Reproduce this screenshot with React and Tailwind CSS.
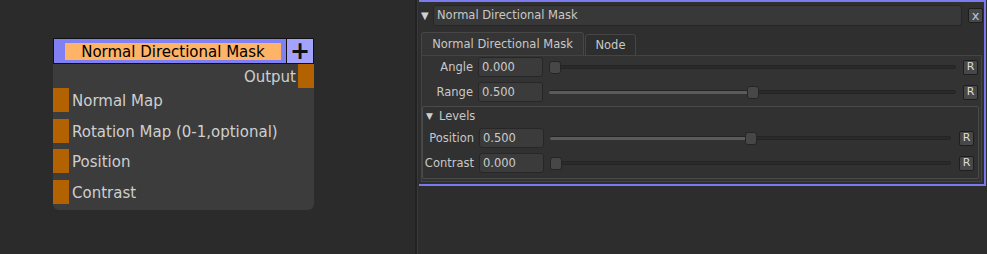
const PORT = "bg-[#b26200]";

function NodeRow({ label }) {
  return (
    <div className="flex h-[24px] items-center">
      <div className={`h-full w-[16px] ${PORT}`} />
      <span className="ml-[3px] pt-[3px] text-[15px] text-[#cfcfcf]">{label}</span>
    </div>
  );
}

function Slider({ value }) {
  return (
    <div className="relative flex h-[13px] flex-1 items-center">
      <div className="h-[4px] w-full rounded-full border border-[#242424] bg-[#2a2a2a]" />
      <div
        className="absolute left-0 top-[5px] h-[3px] rounded-l-full bg-[#5a5a5a]"
        style={{ width: `calc((100% - 12px) * ${value} + 2px)` }}
      />
      <div
        className="absolute top-0 h-[13px] w-[12px] rounded-[3px] border border-[#252525] bg-[#474747]"
        style={{ left: `calc((100% - 12px) * ${value})` }}
      />
    </div>
  );
}

function ParamRow({ label, value, t, trackGap }) {
  return (
    <div className="flex h-[20px] items-center">
      <div className="w-[56px] pr-[5px] pt-[1px] text-right text-[11.5px] text-[#c8c8c8]">{label}</div>
      <div className="flex h-[20px] w-[65px] items-center rounded-[3px] border border-[#272727] bg-[#3b3b3b] pl-[3px] pt-[1px] text-[11.5px] text-[#cccccc]">
        {value}
      </div>
      <div className="ml-[6px] flex flex-1 items-center">
        <Slider value={t} />
      </div>
      <div className={`${trackGap} flex h-[15px] w-[15px] items-center justify-center rounded-[2px] border border-[#1e1e1e] bg-[#484848] text-[11px] text-[#dddddd]`}>
        R
      </div>
    </div>
  );
}

export default function App() {
  return (
    <div
      className="flex h-[254px] w-[987px] bg-[#2b2b2b]"
      style={{ fontFamily: '"DejaVu Sans", Verdana, sans-serif' }}
    >
      {/* node canvas */}
      <div className="w-[415px] pl-[53px] pt-[38px]">
        <div className="w-[261px]">
          <div className="flex h-[26px] border border-[#111111] bg-[#8080f2]">
            <div className="flex flex-1 items-center pl-[11px] pr-[5px]">
              <div className="flex h-[17px] w-full items-center justify-center bg-[#ffb366] pt-[2px] text-[15px] leading-none text-black">
                Normal Directional Mask
              </div>
            </div>
            <div className="flex w-[27px] items-center justify-center border-l border-[#111111] bg-[#a3a3ff] text-[24px] font-bold leading-none text-[#111]">
              +
            </div>
          </div>
          <div className="h-[146px] rounded-b-[6px] bg-[#3c3c3c]">
            <div className="flex h-[24px] items-center justify-end">
              <span className="mr-[2px] pt-[3px] text-[15px] text-[#cfcfcf]">Output</span>
              <div className={`h-full w-[16px] ${PORT}`} />
            </div>
            <div className="flex flex-col gap-[6.5px]">
              <NodeRow label="Normal Map" />
              <NodeRow label="Rotation Map (0-1,optional)" />
              <NodeRow label="Position" />
              <NodeRow label="Contrast" />
            </div>
          </div>
        </div>
      </div>

      {/* splitter */}
      <div className="w-[2px] bg-[#222222]" />
      <div className="w-[1px] bg-[#3a3a3a]" />

      {/* properties panel */}
      <div className="flex-1 bg-[#2d2d2d] pl-[1px]">
        <div className="h-[186px] w-[567px] border-b-2 border-r-2 border-t-2 border-[#7b7bf0] bg-[#2f2f2f] text-[#c8c8c8]">
          <div className="flex h-[24px] items-center pl-[2px] pr-[1px] pt-[3px]">
            <span className="w-[12px] text-[10px] leading-none text-[#d0d0d0]">▼</span>
            <div className="flex h-[21px] flex-1 items-center rounded-[3px] border border-[#262626] bg-[#383838] pl-[3px] pt-[1px] text-[11.5px]">
              Normal Directional Mask
            </div>
            <div className="ml-[6px] flex h-[15px] w-[15px] items-center justify-center rounded-[2px] border border-[#1e1e1e] bg-[#474747] pb-[1px] text-[13px] leading-none text-[#b8c8e0]">
              x
            </div>
          </div>

          <div className="ml-[2px] mt-[6px] flex h-[23px] items-end">
            <div className="flex h-[23px] w-[163px] items-center justify-center rounded-t-[3px] border-l border-r border-t border-[#474747] bg-[#353535] pt-[1px] text-[11.5px]">
              Normal Directional Mask
            </div>
            <div className="ml-[1px] flex h-[21px] w-[51px] items-center justify-center rounded-t-[3px] border-l border-r border-t border-[#454545] bg-[#2e2e2e] pt-[1px] text-[11.5px]">
              Node
            </div>
          </div>

          <div className="ml-[2px] h-[127px] w-[561px] border border-[#444444] bg-[#333333] pt-[1px]">
            <div className="flex flex-col gap-[5px]">
              <ParamRow label="Angle" value="0.000" t={0} trackGap="ml-[7px] mr-[3px]" />
              <ParamRow label="Range" value="0.500" t={0.5} trackGap="ml-[7px] mr-[3px]" />
            </div>
            <div className="mr-[2px] mt-[4px] h-[73px] rounded-[2px] border border-[#4a4a4a] bg-[#313131]">
              <div className="flex h-[18px] items-center pl-[3px] pt-[1px]">
                <span className="w-[13px] text-[9px] leading-none text-[#d0d0d0]">▼</span>
                <span className="text-[11.5px]">Levels</span>
              </div>
              <div className="mt-[3px] flex flex-col gap-[5px]">
                <ParamRow label="Position" value="0.500" t={0.5} trackGap="ml-[8px] mr-[4px]" />
                <ParamRow label="Contrast" value="0.000" t={0} trackGap="ml-[8px] mr-[4px]" />
              </div>
            </div>
          </div>
        </div>
      </div>
    </div>
  );
}
